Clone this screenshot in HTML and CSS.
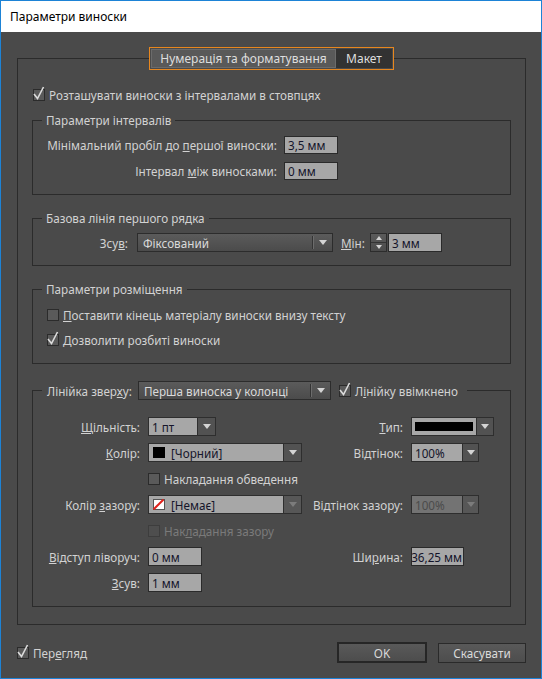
FILE: index.html
```html
<!DOCTYPE html>
<html lang="uk">
<head>
<meta charset="utf-8">
<title>Параметри виноски</title>
<link rel="stylesheet" href="styles.css">
</head>
<body>
<div class="window">
  <div class="titlebar">Параметри виноски</div>
  <div class="client">
    <fieldset class="panel">
      <legend class="tabs-legend"><div class="tabs"><span class="tab tab-a">Нумерація та форматування</span><span class="tab tab-b">Макет</span></div></legend>

      <div class="chkrow main-row">
        <span class="cb"><svg width="16" height="16" viewBox="0 0 16 16"><polyline points="2,8 5.5,12.5 11.5,1" /></svg></span>
        <span class="chklabel">Розташувати виноски з інтервалами в стовпцях</span>
      </div>

      <fieldset class="group g1">
        <legend class="glegend">Параметри інтервалів</legend>
        <div class="g1grid">
          <span class="lbl">Мінімальний пробіл до <u>п</u>ершої виноски:</span>
          <div class="inp h18 w54">3,5 мм</div>
          <span class="lbl"><span>Інтервал <u>м</u>іж виносками:</span></span>
          <div class="inp h18 w54">0 мм</div>
        </div>
      </fieldset>

      <fieldset class="group g2">
        <legend class="glegend">Базова лінія першого рядка</legend>
        <div class="g2row">
          <span class="lbl g2lbl">Зсу<u>в</u>:</span>
          <div class="dd w196"><span class="ddtext">Фіксований</span><span class="ddsep"></span><i class="tri"></i></div>
          <span class="minlbl"><u>М</u>ін:</span>
          <div class="spin"><span class="sp-up"><i class="tri-up"></i></span><span class="sp-dn"><i class="tri"></i></span></div>
          <div class="inp w54">3 мм</div>
        </div>
      </fieldset>

      <fieldset class="group g3">
        <legend class="glegend">Параметри розміщення</legend>
        <div class="g3rows">
          <div class="chkrow">
            <span class="cb"></span>
            <span class="chklabel"><u>П</u>оставити кінець матеріалу виноски внизу тексту</span>
          </div>
          <div class="chkrow">
            <span class="cb"><svg width="16" height="16" viewBox="0 0 16 16"><polyline points="2,8 5.5,12.5 11.5,1" /></svg></span>
            <span class="chklabel"><u>Д</u>озволити розбиті виноски</span>
          </div>
        </div>
      </fieldset>

      <fieldset class="group g4">
        <legend class="glegend g4legend">
          <div class="g4head">
            <span class="g4lbl">Лінійка звер<u>х</u>у:</span>
            <div class="dd w193"><span class="ddtext">Перша виноска у колонці</span><span class="ddsep"></span><i class="tri"></i></div>
            <span class="cb hcb"><svg width="16" height="16" viewBox="0 0 16 16"><polyline points="2,8 5.5,12.5 11.5,1" /></svg></span>
            <span class="chklabel">Л<u>і</u>нійку ввімкнено</span>
          </div>
        </legend>
        <div class="g4grid">
          <span class="lbl"><u>Щ</u>ільність:</span>
          <div class="combo"><div class="cfield w50">1 пт</div><div class="cbtn"><i class="tri"></i></div></div>
          <span class="lbl"><u>Т</u>ип:</span>
          <div class="combo"><div class="cfield w66"><span class="strokebar"></span></div><div class="cbtn w17"><i class="tri"></i></div></div>

          <span class="lbl"><u>К</u>олір:</span>
          <div class="combo"><div class="cfield w136"><span class="sw sw-black"></span>[Чорний]</div><div class="cbtn"><i class="tri"></i></div></div>
          <span class="lbl">Ві<u>д</u>тінок:</span>
          <div class="combo"><div class="cfield w52">100%</div><div class="cbtn w16"><i class="tri"></i></div></div>

          <span class="lbl"></span>
          <div class="chkrow span3">
            <span class="cb"></span>
            <span class="chklabel">Накладання обве<u>д</u>ення</span>
          </div>

          <span class="lbl">Колір <u>з</u>азору:</span>
          <div class="combo"><div class="cfield w136"><span class="sw sw-none"><svg width="11" height="11" viewBox="0 0 11 11"><line x1="0.5" y1="10.5" x2="10.5" y2="0.5" /></svg></span>[Немає]</div><div class="cbtn off"><i class="tri"></i></div></div>
          <span class="lbl">Ві<u>д</u>тінок зазору:</span>
          <div class="combo"><div class="cfield w52 off">100%</div><div class="cbtn w16 off"><i class="tri"></i></div></div>

          <span class="lbl"></span>
          <div class="chkrow span3 disabled">
            <span class="cb"></span>
            <span class="chklabel">Нак<u>л</u>адання зазору</span>
          </div>

          <span class="lbl"><u>В</u>ідступ ліворуч:</span>
          <div class="inp w54">0 мм</div>
          <span class="lbl">Ши<u>р</u>ина:</span>
          <div class="inp w53 rtl"><span>36,25 мм</span></div>

          <span class="lbl"><u>З</u>сув:</span>
          <div class="inp w54">1 мм</div>
        </div>
      </fieldset>
    </fieldset>

    <div class="footer">
      <span class="cb"><svg width="16" height="16" viewBox="0 0 16 16"><polyline points="2,8 5.5,12.5 11.5,1" /></svg></span>
      <span class="chklabel">Пер<u>е</u>гляд</span>
      <div class="buttons">
        <div class="btn ok">OK</div>
        <div class="btn cancel">Скасувати</div>
      </div>
    </div>
  </div>
</div>
</body>
</html>
```

FILE: styles.css
```css
* { box-sizing: border-box; }
html, body { margin: 0; padding: 0; }
body {
  width: 542px;
  height: 679px;
  background: #4a4a4a;
  font-family: "Noto Sans", "Open Sans", sans-serif;
  font-size: 11.7px;
  color: #d2d2d2;
  overflow: hidden;
}
u { text-decoration: underline; text-underline-offset: 1px; }

.window {
  width: 542px;
  height: 679px;
  border: 1px solid #1d83d6;
  background: #4a4a4a;
  display: flex;
  flex-direction: column;
}
.titlebar {
  flex: none;
  height: 31px;
  background: #ffffff;
  color: #000;
  padding-left: 9px;
  display: flex;
  align-items: center;
  font-size: 12px;
}
.client {
  padding: 15px 15px 0 16px;
}

fieldset {
  margin: 0;
  padding: 0;
  border: 1px solid #2b2b2b;
  min-width: 0;
}
legend { padding: 0; }

.panel {
  padding: 15px 14px 17px 14px;
}
.tabs-legend {
  margin: 0 auto;
  border: 1px solid #e8871e;
  padding: 1px;
}
.tabs { display: flex; font-size: 12px; }
.tab {
  height: 19px;
  display: flex;
  align-items: center;
  justify-content: center;
  color: #dedede;
}
.tab-a {
  width: 185px;
  background: #595959;
  border: 1px solid #6b6b6b;
}
.tab-b {
  width: 56px;
  background: #323232;
}

/* checkbox */
.chkrow {
  display: flex;
  align-items: center;
  height: 20px;
}
.cb {
  flex: none;
  position: relative;
  width: 12px;
  height: 12px;
  border: 1px solid #2b2b2b;
  background: #5a5a5a;
}
.cb svg {
  position: absolute;
  left: -2px;
  top: -4px;
  overflow: visible;
}
.cb polyline {
  fill: none;
  stroke: #dcdcdc;
  stroke-width: 1.6;
}
.chklabel { margin-left: 4px; white-space: nowrap; }
.main-row { margin-left: 1px; }
.disabled .cb { background: #4e4e4e; border-color: #3d3d3d; }
.disabled .chklabel { color: #7a7a7a; }

/* groups */
.group { margin-top: 7px; }
.glegend {
  margin-left: 9px;
  padding: 0 4px;
  line-height: 16px;
  height: 16px;
}
.g1 { padding: 8px 0 14px 0; }
.g1grid {
  display: grid;
  grid-template-columns: 251px auto;
  grid-auto-rows: 18px;
  row-gap: 8px;
  align-items: center;
}
.lbl {
  text-align: right;
  padding-right: 7px;
  white-space: nowrap;
}

.g2 { margin-top: 15px; padding: 7px 0 13px 0; }
.g2row { display: flex; align-items: center; height: 19px; }
.g2lbl { width: 95px; padding-right: 0; margin-right: 9px; }
.minlbl { width: 29px; margin-left: 8px; }

.g3 { margin-top: 15px; padding: 8px 0 13px 0; }
.g3rows { display: flex; flex-direction: column; gap: 5px; padding-left: 14px; }

.g4 { margin-top: 17px; padding: 17px 0 14px 0; }
.g4legend { height: 19px; line-height: normal; padding: 0 9px 0 5px; }
.g4head { display: flex; align-items: center; height: 19px; }
.g4lbl { width: 82px; margin-right: 9px; white-space: nowrap; }
.hcb { margin-left: 8px; }
.g4grid {
  display: grid;
  grid-template-columns: 115px 154px 109px auto;
  grid-auto-rows: 19px;
  row-gap: 7px;
  align-items: center;
}
.g4grid .lbl { padding-right: 8px; }
.span3 { grid-column: 2 / span 3; height: 19px; }

/* inputs */
.inp {
  height: 19px;
  border: 1px solid #2a2a2a;
  background: #a7a7a7;
  color: #14142a;
  padding-left: 3px;
  display: flex;
  align-items: center;
  white-space: nowrap;
  overflow: hidden;
}
.h18 { height: 18px; }
.w54 { width: 54px; }
.w53 { width: 53px; }
.rtl { justify-content: flex-end; padding-left: 0; padding-right: 1px; }

/* dark dropdown */
.dd {
  height: 19px;
  border: 1px solid #2c2c2c;
  background: linear-gradient(#5b5b5b, #4b4b4b);
  display: flex;
  align-items: center;
  padding-left: 5px;
  color: #dadada;
  flex: none;
}
.w196 { width: 196px; }
.w193 { width: 193px; }
.ddtext { flex: 1; white-space: nowrap; overflow: hidden; }
.ddsep {
  width: 2px;
  height: 13px;
  border-left: 1px solid #343434;
  border-right: 1px solid #6c6c6c;
  margin-right: 5px;
}
.tri {
  display: block;
  width: 0;
  height: 0;
  border-left: 4px solid transparent;
  border-right: 4px solid transparent;
  border-top: 5px solid #d4d4d4;
}
.dd .tri { margin-right: 5px; }
.tri-up {
  display: block;
  width: 0;
  height: 0;
  border-left: 4px solid transparent;
  border-right: 4px solid transparent;
  border-bottom: 5px solid #d4d4d4;
}

/* spinner */
.spin {
  width: 17px;
  height: 19px;
  border: 1px solid #2c2c2c;
  background: linear-gradient(#5b5b5b, #4b4b4b);
  display: flex;
  flex-direction: column;
  margin-right: 1px;
}
.sp-up, .sp-dn {
  flex: 1;
  display: flex;
  align-items: center;
  justify-content: center;
}
.sp-up { border-bottom: 1px solid #333; }
.spin .tri, .spin .tri-up { border-left-width: 3.5px; border-right-width: 3.5px; border-top-width: 4px; border-bottom-width: 4px; }

/* combo (light field + button) */
.combo { display: flex; height: 19px; }
.cfield {
  height: 19px;
  border: 1px solid #2e2e2e;
  background: #a7a7a7;
  color: #15152a;
  padding-left: 3px;
  display: flex;
  align-items: center;
  white-space: nowrap;
  overflow: hidden;
}
.cfield.off { background: #737373; color: #4b4b4b; }
.w50 { width: 50px; }
.w66 { width: 66px; padding-left: 3px; }
.w136 { width: 136px; }
.w52 { width: 52px; }
.cbtn {
  width: 18px;
  height: 19px;
  border: 1px solid #2e2e2e;
  border-left: none;
  background: #525252;
  display: flex;
  align-items: center;
  justify-content: center;
}
.cbtn.w17 { width: 17px; }
.cbtn.w16 { width: 16px; }
.cbtn.off { background: #575757; }
.cbtn.off .tri { border-top-color: #7c7c7c; }
.strokebar {
  display: block;
  width: 58px;
  height: 9px;
  background: #000;
}
.sw {
  flex: none;
  width: 12px;
  height: 11px;
  margin-right: 6px;
  margin-left: 1px;
}
.sw-black { background: #000; }
.sw-none { background: #fff; border: 1px solid #555; position: relative; }
.sw-none svg { position: absolute; left: -1px; top: -1px; }
.sw-none line { stroke: #e0201a; stroke-width: 2; }

/* footer */
.footer {
  margin-top: 17px;
  display: flex;
  align-items: center;
  height: 21px;
}
.buttons {
  margin-left: auto;
  display: flex;
  align-items: center;
  gap: 11px;
}
.btn {
  display: flex;
  align-items: center;
  justify-content: center;
  border: 1px solid #2a2a2a;
  background: linear-gradient(#595959, #4d4d4d);
  color: #dadada;
}
.btn.ok { width: 90px; height: 21px; border: 2px solid #262626; }
.btn.cancel { width: 88px; height: 20px; }
```
